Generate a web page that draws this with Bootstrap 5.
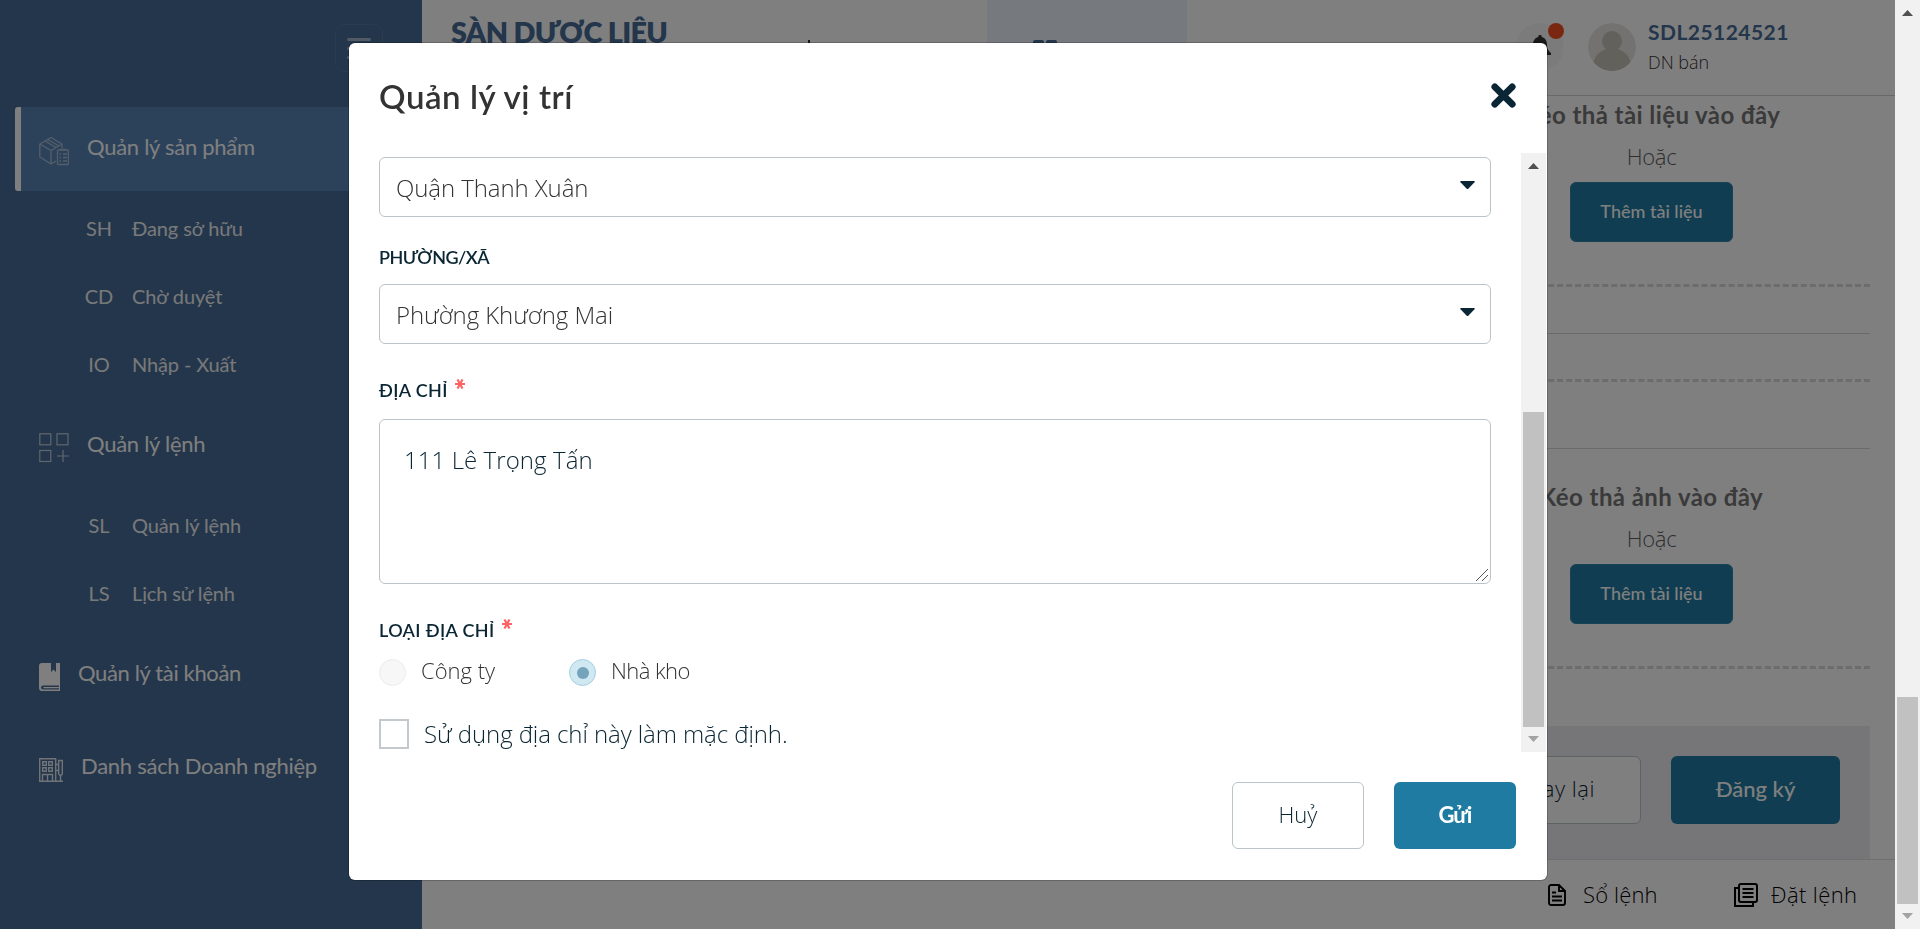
<!DOCTYPE html>
<html lang="vi">
<head>
<meta charset="utf-8">
<meta name="viewport" content="width=device-width, initial-scale=1">
<title>Sàn dược liệu</title>
<link rel="stylesheet" href="https://cdn.jsdelivr.net/npm/bootstrap@5.3.0/dist/css/bootstrap.min.css">
<style>
:root{--navy:#486c96;--brand:#207ba2;--ink:#0a2533}
body{font-family:Lato,"Noto Sans",sans-serif;height:929px;overflow:hidden;background:#fff;color:#333}
.thin{font-family:"Open Sans","Noto Sans",sans-serif;font-weight:350}
.app{width:1895px;height:929px}
/* sidebar */
.side{width:422px;background:var(--navy);padding-top:107px;color:#fff}
.side-toggle{left:335px;top:24px;width:48px;height:48px;border:1px solid #56789f;border-radius:10px}
.side-item{height:84px;margin-left:15px;padding-left:24px;font-size:22px;line-height:32px;letter-spacing:-.27px}
.side-item.on{background:#5884b6;border-left:6px solid #fff;padding-left:18px;border-radius:3px 0 0 3px}
.side-item span{margin:0 0 5px 18px}
.side-item svg{margin-top:4px}
.sub-list{padding:3px 0 6px}
.sub-item{height:68px;font-size:20px;line-height:30px;color:#f0f2f5;letter-spacing:-.12px}
.sub-item b{width:44px;margin-left:77px;margin-right:11px;text-align:center;font-weight:400}
/* header */
.top-bar{height:96px;border-bottom:1px solid #d2d2d2}
.brand-name{font-size:28.8px;font-weight:800;color:var(--navy);line-height:36px;margin:14px 0 0 29px;width:215px;letter-spacing:-.65px;white-space:nowrap}
.top-tab{width:200px;height:95px;font-size:22px;line-height:28px;padding-top:40px}
.top-tab.on{background:#ecf4ff;color:var(--navy)}
.round{width:48px;height:48px;border-radius:50%;margin-top:23px}
.bell{background:#f7f7f7}
.dot{width:16px;height:16px;border-radius:50%;background:#f24f20;right:0;top:0}
.user-id{font-size:21px;font-weight:700;color:var(--navy);line-height:30px;letter-spacing:.45px}
.user-role{font-size:18px;line-height:24px}
/* upload area */
.work{height:763px;padding:0 25px}
.drop{height:191px;border-bottom:3px dashed #d8d8d8}
.drop-in{width:437px;padding-top:1px}
.drop-title{font-size:24px;font-weight:700;line-height:36px;color:#757575;letter-spacing:.42px}
.drop-or{font-size:22px;line-height:36px;margin-top:5px;color:#5e5e5e;letter-spacing:-.3px}
.btn-add{width:163px;height:60px;margin-top:8px;font-size:18px;background:var(--brand);border:1px solid #3187ab;color:#fff;border-radius:6px;padding-bottom:8px;font-weight:500}
.rule{height:1px;background:#d4d4d4}
.dash{border-top:3px dashed #d8d8d8}
.acts{height:133px;background:#ecedf2;gap:30px;padding:30px}
.btn-big{height:68px;font-size:22px;border-radius:6px;padding-bottom:9px}
.btn-brand,.btn-brand:hover{background:var(--brand);color:#fff}
.btn-line{background:#fff;border:1px solid #bbc4c9;color:var(--ink)}
.foot{height:70px;border-top:1px solid #dedede;font-size:22px}
/* dialog */
.modal,.modal-backdrop{width:1895px}
.modal{padding-left:1px}
.modal-dialog{width:1198px;max-width:none;margin:43px auto 0}
.modal-content{height:837px;border:0;border-radius:6px;box-shadow:0 0 0 1px rgba(0,0,0,.2)}
.modal-header{height:110px;border:0;padding:33px 31px 0 30px;align-items:flex-start}
.modal-title{font-size:33px;font-weight:600;line-height:40px;color:#333;letter-spacing:.57px}
.modal-body{height:599px;flex:none;padding:0 1px 0 30px}
.fields{width:1112px;padding-top:4px}
.field{height:60px;border:1px solid #bbc4c9;border-radius:6px;padding:1px 15px 0 16px;font-size:24px;color:#333;letter-spacing:-.08px}
.field svg{margin-top:-5px}
.lab{font-size:18px;font-weight:600;line-height:24px;height:24px;color:var(--ink);letter-spacing:.36px}
.star{width:10px;height:10px;margin-left:7px;margin-top:1px}
.area{height:165px;border:1px solid #bbc4c9;border-radius:6px;padding:22px 24px;font-size:24px;line-height:36px;color:var(--ink);resize:none;display:block;letter-spacing:.08px}
.area:focus{box-shadow:none}
.grip{right:3px;bottom:3px}
.rad{width:27px;height:27px;border-radius:50%;border:1px solid #ececec;background:#f7f7f7}
.rad.on{background:#cfe8f2;border-color:#a4cfe0}
.rad.on::after{content:"";width:12px;height:12px;border-radius:50%;background:#75a3bb}
.rad-text{font-size:22px;line-height:27px;margin-top:-2px;margin-left:15px;color:#333}
.chk{width:30px;height:30px;border:2px solid #c2c8cb}
.chk-text{font-size:24px;line-height:30px;margin-left:15px;color:var(--ink);letter-spacing:-.08px}
.modal-footer{border:0;padding:30px 31px 0 0;gap:30px;align-items:flex-start}
.modal-footer>*{margin:0}
/* scroll tracks */
.track{width:25px;background:#f1f1f1}
.track i{width:21px;background:#c1c1c1}
</style>
</head>
<body class="d-flex">
<div class="app d-flex flex-shrink-0">
  <nav class="side flex-shrink-0 position-relative">
    <div class="side-toggle position-absolute">
      <svg width="46" height="46"><g stroke="#a4b5ca" stroke-width="3" stroke-linecap="round"><path d="M12.500 14.500h21M12.500 23.500h21M12.500 32.500h21"/></g></svg>
    </div>
    <div class="side-item on d-flex align-items-center">
      <svg width="30" height="30" viewBox="0 0 30 30" fill="none" stroke="#a9bdd5" stroke-width="1.300"><path d="M17 25l-5 3L.8 21V8L12 1.500 23 8v4M.8 8L12 14.500 23 8M12 14.500V28M6 5l11 6.500M8.500 3.500L20 10"/><rect x="18.500" y="14" width="11" height="14.500" rx="1"/><path d="M21 13.500h6M20.500 18h1.500M24 18h4M20.500 21.500h1.500M24 21.500h4M20.500 25h1.500M24 25h4" stroke-width="1.500"/></svg>
      <span>Quản lý sản phẩm</span>
    </div>
    <div class="sub-list">
      <div class="sub-item d-flex align-items-center"><b>SH</b><span>Đang sở hữu</span></div>
      <div class="sub-item d-flex align-items-center"><b>CD</b><span>Chờ duyệt</span></div>
      <div class="sub-item d-flex align-items-center"><b>IO</b><span>Nhập - Xuất</span></div>
    </div>
    <div class="side-item d-flex align-items-center">
      <svg width="30" height="30" viewBox="0 0 30 30" fill="none" stroke="#c2cedc" stroke-width="1.200"><rect x=".8" y=".8" width="11" height="11"/><rect x="18" y=".8" width="11" height="11"/><rect x=".8" y="17.500" width="11" height="11"/><path d="M18 23h12M24 17v12"/></svg>
      <span>Quản lý lệnh</span>
    </div>
    <div class="sub-list">
      <div class="sub-item d-flex align-items-center"><b>SL</b><span>Quản lý lệnh</span></div>
      <div class="sub-item d-flex align-items-center"><b>LS</b><span>Lịch sử lệnh</span></div>
    </div>
    <div class="side-item d-flex align-items-center" style="letter-spacing:-.36px">
      <svg width="21" height="28" viewBox="0 0 21 28"><path fill="#fff" fill-rule="evenodd" d="M3 0h9v9l2.500-2.500L17 9V0h4v28H3a3 3 0 0 1-3-3V3a3 3 0 0 1 3-3zM4 22.500a2 2 0 0 0 0 4h16v-1.300H4.500v-1.200H20v-1.500z"/></svg>
      <span>Quản lý tài khoản</span>
    </div>
    <div class="side-item d-flex align-items-center" style="margin-top:9px">
      <svg width="24" height="24" viewBox="0 0 24 24" fill="none" stroke="#e1e7ee" stroke-width="1.400"><path d="M.7 23.300V.7h16v22.600M0 23.300h24M3.500 23v-6.500h10V23M8.500 16.500V23M17 6.500h2.500M17 12.500h2.500M21.500 18v5"/><path d="M3.700 3.700h3.600v3.600H3.700zM9.700 3.700h3.600v3.600H9.700zM3.700 9.700h3.600v3.600H3.700zM9.700 9.700h3.600v3.600H9.700zM19.700 2.500h3.600V16l-1.800 2-1.800-2z"/></svg>
      <span>Danh sách Doanh nghiệp</span>
    </div>
  </nav>

  <div class="flex-grow-1 d-flex flex-column">
    <header class="top-bar d-flex align-items-start">
      <div class="brand-name">SÀN DƯỢC LIỆU</div>
      <div class="d-flex" style="margin-left:121px">
        <div class="top-tab d-flex" style="padding-left:16px"><svg width="22" height="24" viewBox="0 0 22 24" fill="none" stroke="#333" stroke-width="2"><path d="M6 0v22M12 9v13M18 12v10"/></svg>Toàn quốc</div>
        <div class="top-tab on d-flex" style="padding-left:46px"><svg width="25" height="25" viewBox="0 0 25 25" fill="#486c96" style="margin-right:15px"><rect width="11" height="11" rx="2"/><rect x="13" width="11" height="11" rx="2"/><rect y="13" width="11" height="11" rx="2"/><rect x="13" y="13" width="11" height="11" rx="2"/></svg>Quầy số</div>
      </div>
      <div class="d-flex ms-auto" style="padding-right:106px">
        <div class="round bell position-relative d-flex justify-content-center" style="margin-right:24px">
          <svg width="22" height="26" viewBox="0 0 22 26" style="margin-top:12px" fill="#333"><path d="M11 0a1.700 1.700 0 0 1 1.700 2C16.500 3 18 6 18 10c0 4 1.500 6 4 8v2H0v-2c2.500-2 4-4 4-8 0-4 1.500-7 5.300-8A1.700 1.700 0 0 1 11 0zM8 22h6a3 3 0 0 1-6 0z"/></svg>
          <span class="dot position-absolute"></span>
        </div>
        <svg class="round" viewBox="0 0 48 48" style="margin-right:12px"><circle cx="24" cy="24" r="24" fill="#e6e4e0"/><circle cx="24" cy="18" r="10" fill="#c4c2b8"/><path fill="#c4c2b8" d="M5.500 39.500C8 30 15 25.500 24 25.500S40 30 42.500 39.500A24 24 0 0 1 5.500 39.500z"/></svg>
        <div style="padding-top:17px;width:141px">
          <div class="user-id">SDL25124521</div>
          <div class="user-role thin" style="margin-top:3px">DN bán</div>
        </div>
      </div>
    </header>

    <main class="work">
      <section class="drop">
        <div class="drop-in ms-auto d-flex flex-column align-items-center">
          <div class="drop-title">Kéo thả tài liệu vào đây</div>
          <div class="drop-or thin">Hoặc</div>
          <button class="btn btn-add">Thêm tài liệu</button>
        </div>
      </section>
      <div class="rule" style="margin-top:46px"></div>
      <div class="dash" style="margin-top:45px"></div>
      <div class="rule" style="margin-top:66px"></div>
      <section class="drop" style="margin-top:29px">
        <div class="drop-in ms-auto d-flex flex-column align-items-center">
          <div class="drop-title">Kéo thả ảnh vào đây</div>
          <div class="drop-or thin">Hoặc</div>
          <button class="btn btn-add">Thêm tài liệu</button>
        </div>
      </section>
      <div class="acts d-flex justify-content-end" style="margin-top:57px">
        <button class="btn btn-big btn-line thin" style="width:175px;letter-spacing:.5px">Quay lại</button>
        <button class="btn btn-big btn-brand fw-medium" style="width:169px">Đăng ký</button>
      </div>
    </main>

    <footer class="foot d-flex justify-content-end align-items-center thin text-black">
      <svg width="18" height="22" viewBox="0 0 18 22" fill="none" stroke="#000" stroke-width="2"><path d="M3 1h8l6 6v12a2 2 0 0 1-2 2H3a2 2 0 0 1-2-2V3a2 2 0 0 1 2-2zM11 1v6h6M4 8.500h4M4 12.500h10M4 16.500h10" stroke-width="1.900"/></svg>
      <span style="margin-left:17px;width:151px;letter-spacing:.15px">Sổ lệnh</span>
      <svg width="24" height="24" viewBox="0 0 24 24" fill="none" stroke="#000" stroke-width="2"><rect x="5" y="1" width="18" height="18" rx="2"/><path d="M4 5H1v18h18v-3M8.500 6h11M8.500 10h11M8.500 14h11"/></svg>
      <span style="margin-left:13px;width:124px;letter-spacing:.4px">Đặt lệnh</span>
    </footer>
  </div>
</div>

<div class="track flex-shrink-0 d-flex flex-column align-items-center">
  <svg width="11" height="6" style="margin-top:10px" fill="#505050"><path d="M5.500 0L11 6H0z"/></svg>
  <i style="margin-top:681px;height:207px"></i>
  <svg width="11" height="6" style="margin-top:9px" fill="#a3a3a3"><path d="M0 0h11L5.500 6z"/></svg>
</div>

<div class="modal-backdrop show"></div>
<div class="modal d-block overflow-hidden" tabindex="-1">
  <div class="modal-dialog">
    <div class="modal-content">
      <div class="modal-header">
        <h5 class="modal-title">Quản lý vị trí</h5>
        <svg width="25" height="25" viewBox="0 0 25 25" style="margin-top:7px" stroke="#0a2533" stroke-width="6.800" stroke-linecap="round"><path d="M3.800 3.800l17.400 17.400M21.200 3.800L3.800 21.200"/></svg>
      </div>
      <div class="modal-body d-flex justify-content-between overflow-hidden">
        <div class="fields">
          <div class="field thin d-flex align-items-center justify-content-between">Quận Thanh Xuân<svg width="15" height="8" fill="#0a2533"><path d="M1 0h13q1.500 0 .5 1.300L8.500 7.500q-1 1-2 0L.5 1.300Q-.5 0 1 0z"/></svg></div>
          <div class="lab" style="margin-top:28px;letter-spacing:-.53px">PHƯỜNG/XÃ</div>
          <div class="field thin d-flex align-items-center justify-content-between" style="margin-top:15px">Phường Khương Mai<svg width="15" height="8" fill="#0a2533"><path d="M1 0h13q1.500 0 .5 1.300L8.500 7.500q-1 1-2 0L.5 1.300Q-.5 0 1 0z"/></svg></div>
          <div class="lab d-flex" style="margin-top:34px">ĐỊA CHỈ<svg class="star" viewBox="0 0 10 10" stroke="#ff6464" stroke-width="2.200"><path d="M0 5h10M2.500 .5l5 9M7.500 .5l-5 9"/></svg></div>
          <div class="position-relative" style="margin-top:17px">
            <textarea class="area form-control thin">111 Lê Trọng Tấn</textarea>
            <svg class="grip position-absolute" width="12" height="12" stroke="#555" stroke-width="1"><path d="M0 12L12 0M6 12l6-6"/></svg>
          </div>
          <div class="lab d-flex" style="margin-top:34px">LOẠI ĐỊA CHỈ<svg class="star" viewBox="0 0 10 10" stroke="#ff6464" stroke-width="2.200"><path d="M0 5h10M2.500 .5l5 9M7.500 .5l-5 9"/></svg></div>
          <div class="d-flex" style="margin-top:17px">
            <span class="rad"></span><span class="rad-text thin" style="width:148px">Công ty</span>
            <span class="rad on d-flex align-items-center justify-content-center"></span><span class="rad-text thin" style="letter-spacing:-.55px">Nhà kho</span>
          </div>
          <div class="d-flex" style="margin-top:33px"><span class="chk"></span><span class="chk-text thin">Sử dụng địa chỉ này làm mặc định.</span></div>
        </div>
        <div class="track flex-shrink-0 d-flex flex-column align-items-center">
          <svg width="11" height="6" style="margin-top:10px" fill="#505050"><path d="M5.500 0L11 6H0z"/></svg>
          <i style="margin-top:243px;height:315px"></i>
          <svg width="11" height="6" style="margin-top:9px" fill="#a3a3a3"><path d="M0 0h11L5.500 6z"/></svg>
        </div>
      </div>
      <div class="modal-footer">
        <button class="btn btn-big btn-line thin" style="width:132px;height:67px">Huỷ</button>
        <button class="btn btn-big btn-brand fw-bold" style="width:122px;height:67px;letter-spacing:-.9px">Gửi</button>
      </div>
    </div>
  </div>
</div>
<script src="https://cdn.jsdelivr.net/npm/bootstrap@5.3.0/dist/js/bootstrap.bundle.min.js"></script>
</body>
</html>
